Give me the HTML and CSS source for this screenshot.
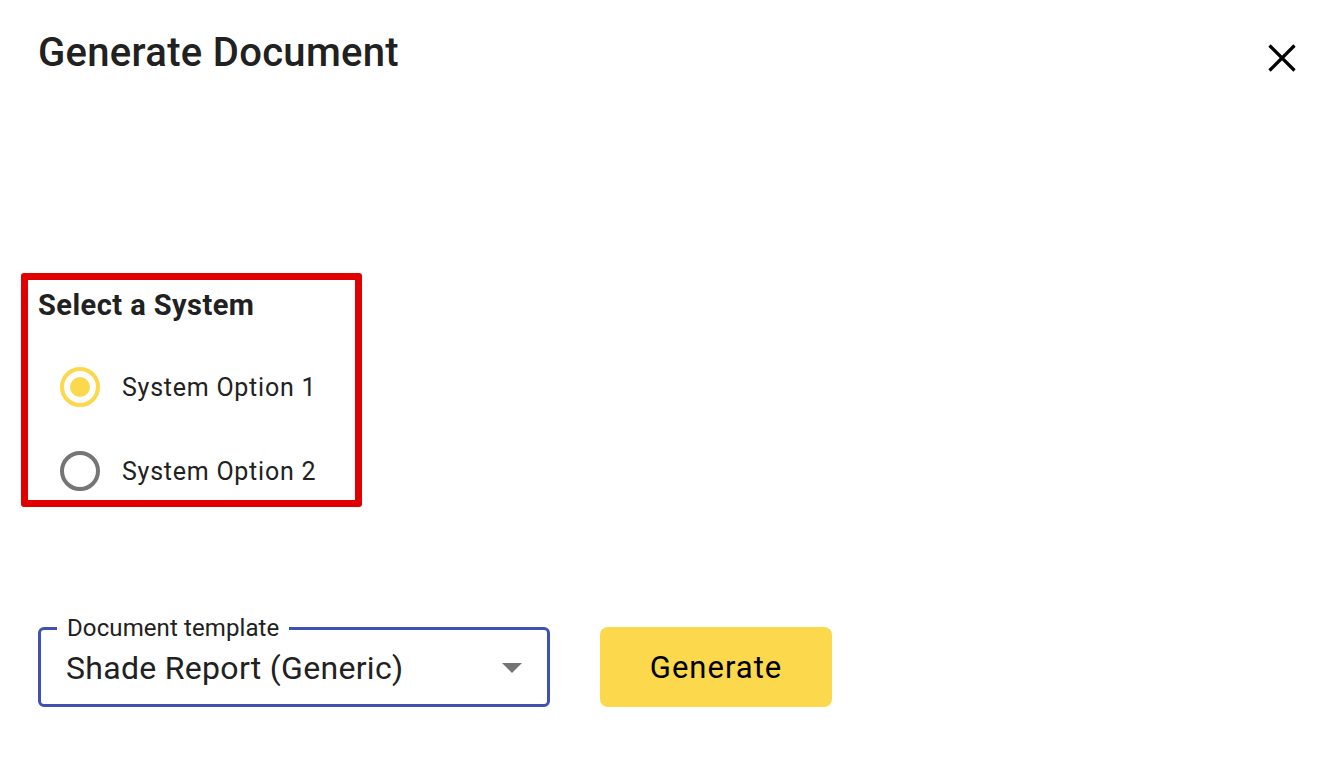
FILE: index.html
```html
<!DOCTYPE html>
<html>
<head>
<meta charset="utf-8">
<link rel="stylesheet" href="styles.css">
</head>
<body>
<div class="dialog">
  <header class="head">
    <h1 class="title">Generate Document</h1>
    <button class="close" aria-label="close">
      <svg width="28" height="28" viewBox="0 0 28 28"><path d="M1.5 1.5 L26.5 26.5 M26.5 1.5 L1.5 26.5" stroke="#000" stroke-width="3.2" fill="none"/></svg>
    </button>
  </header>

  <section class="system">
    <div class="sys-title">Select a System</div>
    <label class="opt">
      <span class="radio on"><span class="dot"></span></span>
      <span class="opt-text">System Option 1</span>
    </label>
    <label class="opt">
      <span class="radio"></span>
      <span class="opt-text">System Option 2</span>
    </label>
  </section>

  <div class="actions">
    <div class="select">
      <span class="select-label">Document template</span>
      <span class="select-value">Shade Report (Generic)</span>
      <span class="arrow"></span>
    </div>
    <button class="gen">Generate</button>
  </div>
</div>
</body>
</html>
```
FILE: styles.css
```css
* { box-sizing: border-box; }
html, body { margin: 0; padding: 0; background: #fff; }
body { font-family: Roboto, "Noto Sans", sans-serif; color: #212121; width: 1338px; height: 766px; overflow: hidden; }
.dialog { padding-top: 29px; }
.head { display: flex; justify-content: space-between; align-items: flex-start; padding: 0 42px 0 38px; }
.title { margin: 0; font-size: 40px; line-height: 48px; font-weight: 500; color: #212121; letter-spacing: 0.3px; }
.close { background: none; border: 0; padding: 0; margin-top: 15px; width: 28px; height: 28px; display: block; }
.close svg { display: block; }

.system { margin: 196px 0 0 21px; width: 341px; height: 234px; border: 7px solid #e00000; border-radius: 3px; padding: 8px 0 0 10px; }
.sys-title { font-size: 29px; font-weight: 700; line-height: 35px; color: #212121; letter-spacing: 0.45px; }
.opt { display: flex; align-items: center; height: 84px; padding-left: 22px; }
.opt:first-of-type { margin-top: 22px; }
.radio { width: 40px; height: 40px; border-radius: 50%; border: 4px solid #757575; display: flex; align-items: center; justify-content: center; flex: none; }
.radio.on { border-color: #fbd84c; }
.dot { width: 20px; height: 20px; border-radius: 50%; background: #fbd84c; }
.opt-text { margin-left: 22px; font-size: 25px; color: #212121; letter-spacing: 0.75px; }

.actions { display: flex; align-items: center; gap: 50px; margin: 120px 0 0 38px; }
.select { position: relative; width: 512px; height: 80px; border: 3px solid #3f51b5; border-radius: 6px; display: flex; align-items: center; padding-left: 25px; }
.select-label { position: absolute; left: 16px; top: -16px; background: #fff; padding: 0 10px; font-size: 24px; line-height: 28px; color: #212121; letter-spacing: 0.1px; }
.select-value { font-size: 32px; color: #212121; margin-top: 2px; letter-spacing: 0.3px; }
.arrow { position: absolute; right: 25px; top: 33px; width: 0; height: 0; border-left: 10px solid transparent; border-right: 10px solid transparent; border-top: 10px solid #757575; }
.gen { width: 232px; height: 80px; border: 0; border-radius: 8px; background: #fbd84c; font-family: Roboto, sans-serif; font-size: 31px; font-weight: 400; color: #000; padding: 0; letter-spacing: 1px; }
```
